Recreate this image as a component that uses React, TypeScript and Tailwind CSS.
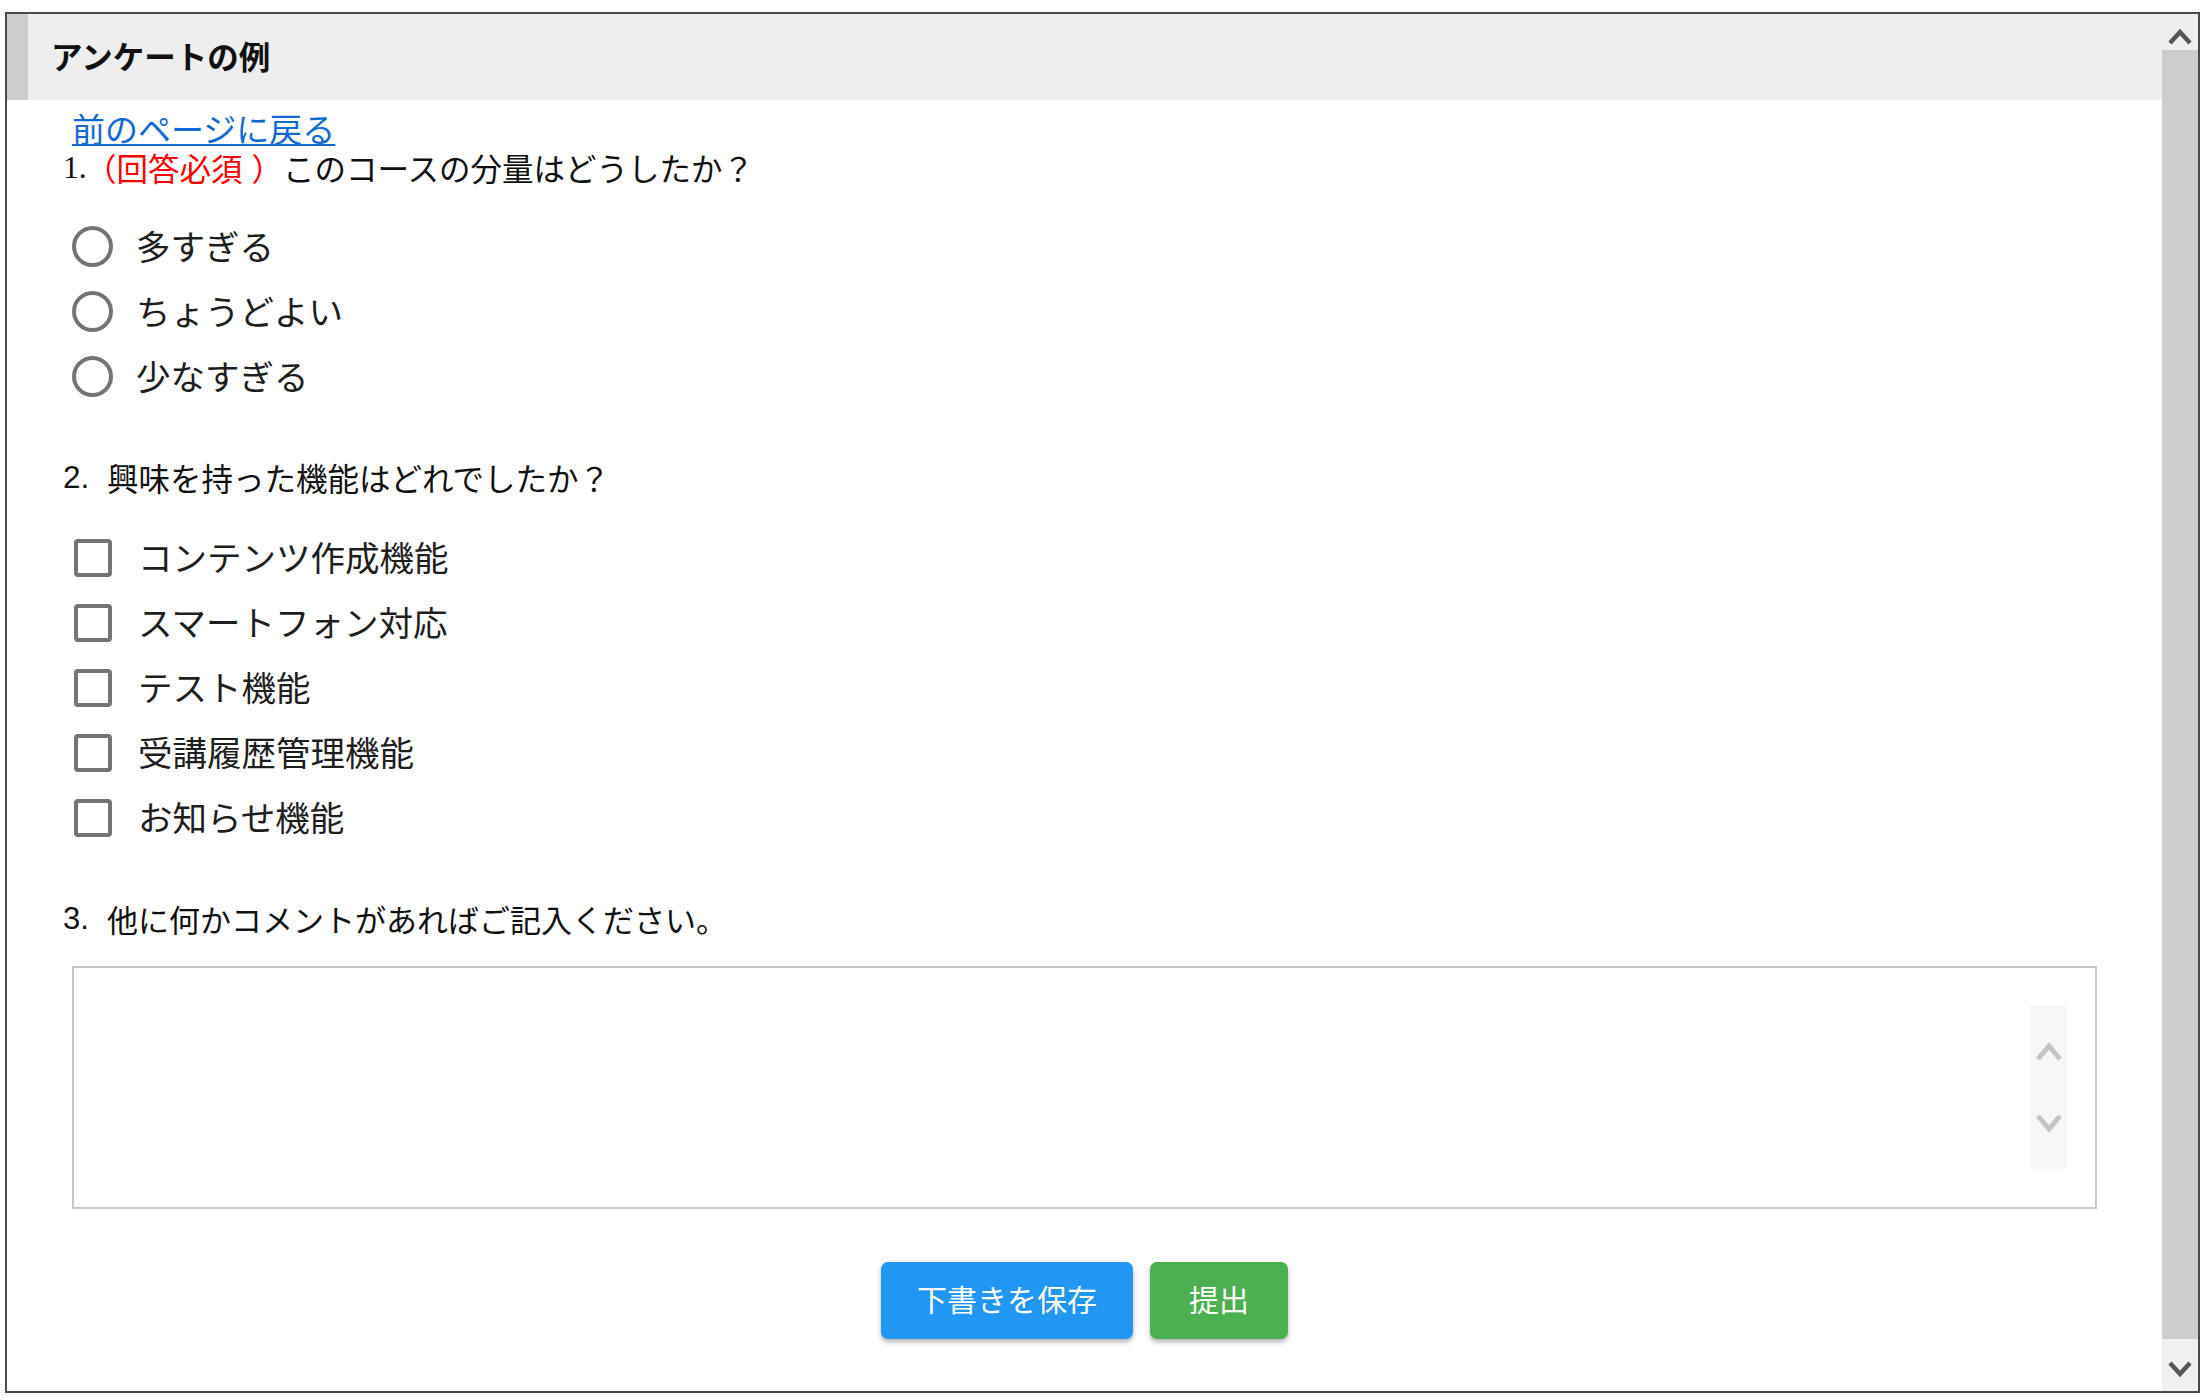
import React from "react";

const jp = "font-['Noto_Sans_CJK_JP','Noto_Sans',sans-serif]";

function Chevron({ up, color, w, h, sw }: { up: boolean; color: string; w: number; h: number; sw: number }) {
  const pts = up ? `2,${h - 3} ${w / 2},4 ${w - 2},${h - 3}` : `2,3 ${w / 2},${h - 4} ${w - 2},3`;
  return (
    <svg width={w} height={h} viewBox={`0 0 ${w} ${h}`}>
      <polyline points={pts} fill="none" stroke={color} strokeWidth={sw} strokeLinejoin="miter" strokeLinecap="butt" />
    </svg>
  );
}

function Radio({ label }: { label: string }) {
  return (
    <div className="flex h-[65px] items-center pl-[65px]">
      <div className="h-[41px] w-[41px] shrink-0 rounded-full border-4 border-[#747474] bg-white" />
      <span className={`ml-[23px] whitespace-nowrap pb-[3px] text-[34.5px] leading-none text-[#1e1e1e] ${jp}`}>{label}</span>
    </div>
  );
}

function Check({ label }: { label: string }) {
  return (
    <div className="flex h-[65px] items-center pl-[67px]">
      <div className="h-[38px] w-[38px] shrink-0 rounded-[4px] border-4 border-[#747474] bg-white" />
      <span className={`ml-[26px] whitespace-nowrap pb-[3px] text-[34.5px] leading-none text-[#1e1e1e] ${jp}`}>{label}</span>
    </div>
  );
}

export default function App() {
  return (
    <div className="min-h-screen bg-white pl-[5px] pt-[12px]">
      <div className="flex h-[1381px] w-[2195px] border-2 border-[#4a4a4a] bg-white">
        <div className="flex min-w-0 flex-1 flex-col">
          <div className="flex h-[86px] shrink-0 bg-[#eeeeee]">
            <div className="w-[21px] bg-[#cccccc]" />
            <div className={`flex items-center pb-[3px] pl-[23px] text-[31.5px] font-bold text-[#111] ${jp}`}>アンケートの例</div>
          </div>

          <div className="flex flex-col pt-[11px]">
            <div className="flex h-[40px] items-center pb-[6px] pl-[65px]">
              <a
                href="#"
                className={`text-[33px] leading-none text-[#1369d4] underline decoration-2 underline-offset-[2px] ${jp}`}
              >
                前のページに戻る
              </a>
            </div>

            <div className={`flex h-[40px] items-center whitespace-nowrap pb-[6px] pl-[56px] text-[31.5px] leading-none text-[#111] ${jp}`}>
              <span className="w-[22px] shrink-0 font-['Liberation_Serif',serif]">1.</span>
              <span className="shrink-0 text-[#ff0000]">（回答必須</span>
              <span className="ml-[9px] shrink-0 text-[#ff0000]">）</span>
              <span className="shrink-0">このコースの分量はどうしたか？</span>
            </div>

            <div className="mt-[23px] flex flex-col">
              <Radio label="多すぎる" />
              <Radio label="ちょうどよい" />
              <Radio label="少なすぎる" />
            </div>

            <div className={`mt-[52px] flex h-[40px] items-center whitespace-nowrap pb-[6px] pl-[56px] text-[31.5px] leading-none text-[#111] ${jp}`}>
              <span className="w-[44px] shrink-0 font-['Liberation_Sans',sans-serif]">2.</span>
              <span className="shrink-0">興味を持った機能はどれでしたか？</span>
            </div>

            <div className="mt-[24px] flex flex-col">
              <Check label="コンテンツ作成機能" />
              <Check label="スマートフォン対応" />
              <Check label="テスト機能" />
              <Check label="受講履歴管理機能" />
              <Check label="お知らせ機能" />
            </div>

            <div className={`mt-[51px] flex h-[40px] items-center whitespace-nowrap pb-[6px] pl-[56px] text-[31px] leading-none text-[#111] ${jp}`}>
              <span className="w-[44px] shrink-0 font-['Liberation_Sans',sans-serif]">3.</span>
              <span className="shrink-0">他に何かコメントがあればご記入ください。</span>
            </div>

            <div className="mx-[65px] mt-[25px] flex h-[243px] items-center justify-end border-2 border-[#c8c8c8] bg-white pr-[28px]">
              <div className="flex h-[163px] w-[37px] flex-col items-center justify-between bg-[#f7f7f7] py-[36px]">
                <Chevron up color="#c4c4c4" w={26} h={20} sw={5} />
                <Chevron up={false} color="#c4c4c4" w={26} h={20} sw={5} />
              </div>
            </div>

            <div className="mt-[53px] flex justify-center gap-[17px]">
              <button
                className={`flex h-[77px] items-center justify-center whitespace-nowrap rounded-[7px] bg-[#2196f3] px-[36px] pb-[6px] text-[30px] leading-none text-white shadow-[0_3px_5px_rgba(0,0,0,0.3)] ${jp}`}
              >
                下書きを保存
              </button>
              <button
                className={`flex h-[77px] items-center justify-center whitespace-nowrap rounded-[7px] bg-[#4caf50] px-[39px] pb-[6px] text-[30px] leading-none text-white shadow-[0_3px_5px_rgba(0,0,0,0.3)] ${jp}`}
              >
                提出
              </button>
            </div>
          </div>
        </div>

        <div className="flex w-[36px] shrink-0 flex-col">
          <div className="flex h-[36px] items-center justify-center bg-[#eeeeee] pt-[10px]">
            <Chevron up color="#555555" w={24} h={18} sw={4.5} />
          </div>
          <div className="flex-1 bg-[#cdcdcd]" />
          <div className="flex h-[52px] items-center justify-center bg-[#f0f0f0] pt-[8px]">
            <Chevron up={false} color="#555555" w={24} h={18} sw={4.5} />
          </div>
        </div>
      </div>
    </div>
  );
}
